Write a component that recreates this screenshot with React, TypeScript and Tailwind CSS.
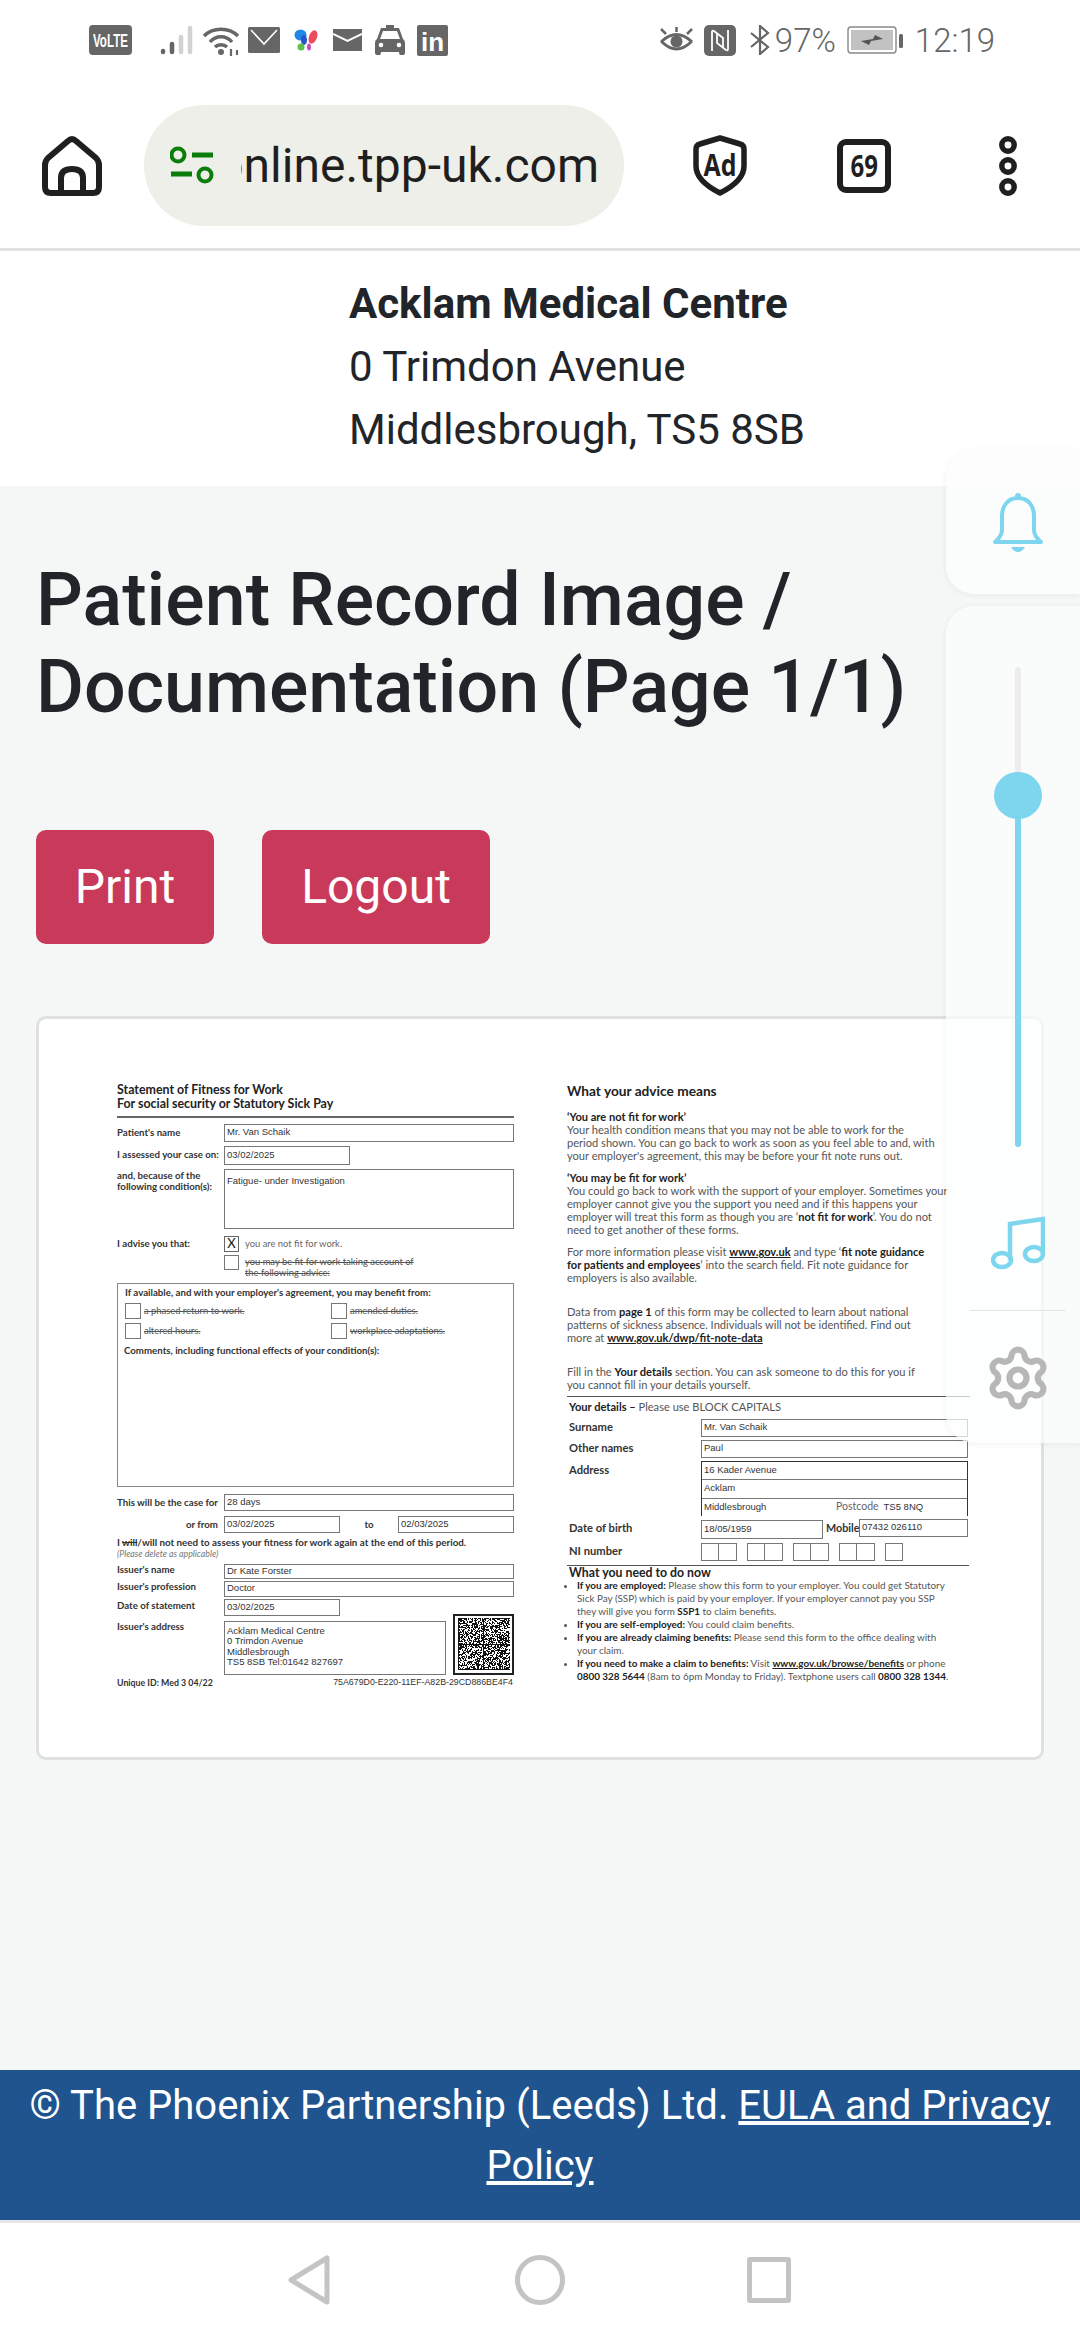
import React from "react";
import { Settings } from "lucide-react";

const ROB = "font-['Roboto',sans-serif]";
const ARIAL = "font-['Liberation_Sans',sans-serif]";

function Qr() {
  const rects: React.ReactNode[] = [];
  let s = 12345;
  const n = 52;
  for (let y = 0; y < n; y++) {
    for (let x = 0; x < n; x++) {
      s = (s * 1103515245 + 12345) & 0x7fffffff;
      const edge = y === 0 ? x % 2 === 0 : x === 0 || y === n - 1 || x === 25 || y === 26 ? true : false;
      if (edge || (s >> 12) % 100 < 52) rects.push(<rect key={x + "-" + y} x={x} y={y} width="1" height="1" />);
    }
  }
  return (
    <svg width="52" height="52" viewBox="0 0 52 52" shapeRendering="crispEdges" fill="#111">
      {rects}
    </svg>
  );
}

function Field({ children, className }: { children?: React.ReactNode; className: string }) {
  return (
    <div className={"border border-[#777] pl-[2px] flex items-center whitespace-nowrap text-[9.5px] text-[#333] " + ARIAL + " " + className}>
      {children}
    </div>
  );
}

function StatusBar() {
  return (
    <div className="h-[68px] pt-[12px] flex items-center justify-between pl-[89px] pr-[85px] bg-white">
      <div className="flex items-center">
        <svg width="43" height="30" viewBox="0 0 43 30">
          <rect width="43" height="30" rx="4" fill="#666" />
          <text x="21.5" y="22" textAnchor="middle" fontFamily="'Liberation Sans',sans-serif" fontWeight="700" fontSize="18" fill="#fff" textLength="35" lengthAdjust="spacingAndGlyphs">VoLTE</text>
        </svg>
        <svg className="ml-[28px]" width="33" height="30" viewBox="0 0 33 30" strokeLinecap="round" strokeWidth="4.5">
          <path d="M3 26V27" stroke="#666" />
          <path d="M12 19V27" stroke="#666" />
          <path d="M21 12V27" stroke="#d2d2d2" />
          <path d="M30 3V27" stroke="#d2d2d2" />
        </svg>
        <svg className="ml-[9px]" width="38" height="31" viewBox="0 0 38 31" fill="none" stroke="#666" strokeWidth="3.4">
          <path d="M2 11C11 2 27 2 36 11" />
          <path d="M8 17C14 10 24 10 30 17" />
          <path d="M13 22C16 19 22 19 25 22" />
          <circle cx="19" cy="27" r="3" fill="#666" stroke="none" />
          <path d="M29 31V24M35 25L35 30" strokeWidth="2.2" />
        </svg>
        <svg className="ml-[8px]" width="32" height="26" viewBox="0 0 32 26">
          <rect width="32" height="26" rx="1.5" fill="#666" />
          <path d="M3 3L16 17L29 3" fill="none" stroke="#fff" strokeWidth="1.6" />
        </svg>
        <svg className="ml-[14px]" width="24" height="22" viewBox="0 0 24 22">
          <ellipse cx="6.5" cy="6" rx="6" ry="5.5" fill="#1f88e5" />
          <ellipse cx="10" cy="11" rx="3" ry="5" fill="#2456c9" />
          <ellipse cx="19" cy="8" rx="4" ry="7" fill="#ef4b5f" transform="rotate(20 19 8)" />
          <ellipse cx="7" cy="18" rx="3.5" ry="3.5" fill="#5fbf4a" />
          <ellipse cx="15" cy="18" rx="2" ry="3.5" fill="#c74bc9" />
        </svg>
        <svg className="ml-[15px]" width="29" height="22" viewBox="0 0 29 22">
          <rect width="29" height="22" fill="#666" />
          <path d="M0 5L14.5 12L29 5" fill="none" stroke="#fff" strokeWidth="2" />
        </svg>
        <svg className="ml-[13px]" width="30" height="30" viewBox="0 0 30 30">
          <path d="M11 0H19V3H24L28 14Q30 15 30 18V28Q30 30 27 30H25Q24 30 24 27H6Q6 30 5 30H3Q0 30 0 28V18Q0 15 2 14L6 3H11Z" fill="#666" />
          <path d="M8 6H22L25 14H5Z" fill="#fff" />
          <circle cx="6" cy="20" r="2.3" fill="#fff" />
          <circle cx="24" cy="20" r="2.3" fill="#fff" />
        </svg>
        <svg className="ml-[12px]" width="31" height="31" viewBox="0 0 31 31">
          <rect width="31" height="31" rx="2" fill="#666" />
          <text x="15.5" y="26" textAnchor="middle" fontFamily="'Liberation Sans',sans-serif" fontWeight="700" fontSize="26" fill="#fff">in</text>
        </svg>
      </div>
      <div className="flex items-center">
        <svg width="35" height="27" viewBox="0 0 35 27" fill="none" stroke="#666">
          <path d="M3 14Q17.5 1 32 14Q32 15 32 15Q17.5 29 3 15Z" strokeWidth="3" />
          <circle cx="17.5" cy="14.500" r="6" fill="#666" stroke="none" />
          <path d="M2 2L7 7M17.500 0V5M33 2L28 7" strokeWidth="2.5" />
        </svg>
        <svg className="ml-[10px]" width="32" height="31" viewBox="0 0 32 31">
          <rect width="32" height="31" rx="5" fill="#666" />
          <path d="M8 26V7Q8 5 10 6L19 13V23M24 5V24Q24 26 22 25L13 18V8" fill="none" stroke="#fff" strokeWidth="1.8" />
        </svg>
        <svg className="ml-[13px]" width="22" height="30" viewBox="0 0 22 30" fill="none" stroke="#666" strokeWidth="2.2">
          <path d="M2 8L19 22L11 29V1L19 8L2 22" />
        </svg>
        <span className={"ml-[4px] text-[33px] leading-none text-[#666] font-light " + ROB}>97%</span>
        <svg className="ml-[11px]" width="56" height="28" viewBox="0 0 56 28">
          <rect x="1" y="1" width="48" height="26" rx="3" fill="#fff" stroke="#888" strokeWidth="1.4" />
          <rect x="4" y="4" width="42" height="20" fill="#c2c2c2" />
          <path d="M14 15L26 13L28 9L36 13L24 15L22 19Z" fill="#555" />
          <rect x="52" y="8" width="4" height="14" rx="1.5" fill="#666" />
        </svg>
        <span className={"ml-[12px] text-[33px] leading-none text-[#666] font-light " + ROB}>12:19</span>
      </div>
    </div>
  );
}

function Toolbar() {
  return (
    <div className="h-[180px] pt-[15px] pl-[42px] flex items-center bg-white">
      <svg width="60" height="60" viewBox="0 0 60 60" fill="none" stroke="#1f1f1f" strokeWidth="6" strokeLinejoin="round">
        <path d="M26 5Q30 1 34 5L54 22Q57 25 57 29V51Q57 57 51 57H9Q3 57 3 51V29Q3 25 6 22Z" />
        <path d="M19 57V42Q19 33 30 33Q41 33 41 42V57" />
      </svg>
      <div className="ml-[42px] w-[480px] h-[121px] rounded-[60px] bg-[#eeefe9] flex items-center pl-[26px]">
        <svg width="44" height="40" viewBox="0 0 44 40" fill="none" stroke="#0a7d0a" strokeWidth="4">
          <circle cx="8" cy="9" r="6.500" />
          <circle cx="35" cy="29" r="6.500" />
          <path d="M22 9H43M1 28H22" strokeWidth="5" />
        </svg>
        <div className="ml-[27px] w-[358px] overflow-hidden flex justify-end">
          <span className={"text-[48px] leading-[60px] text-[#1f1f1f] whitespace-nowrap " + ROB}>online.tpp-uk.com</span>
        </div>
      </div>
      <svg className="ml-[69px]" width="54" height="61" viewBox="0 0 54 61">
        <path d="M27 3L47 9Q51 10 51 14V31Q51 46 27 58Q3 46 3 31V14Q3 10 7 9Z" fill="none" stroke="#1f1f1f" strokeWidth="5.500" strokeLinejoin="round" />
        <text x="27" y="41" textAnchor="middle" fontFamily="'Open Sans',sans-serif" fontWeight="700" fontSize="30" fill="#1f1f1f" textLength="33" lengthAdjust="spacingAndGlyphs">Ad</text>
      </svg>
      <div className="ml-[90px] w-[54px] h-[54px] rounded-[9px] border-[6px] border-[#1f1f1f] flex items-center justify-center">
        <span className="font-['Open_Sans',sans-serif] font-bold text-[30px] leading-none text-[#1f1f1f] scale-x-[0.8]">69</span>
      </div>
      <svg className="ml-[108px]" width="18" height="60" viewBox="0 0 18 60" fill="none" stroke="#1f1f1f" strokeWidth="5.500">
        <circle cx="9" cy="9" r="6.200" />
        <circle cx="9" cy="30" r="6.200" />
        <circle cx="9" cy="51" r="6.200" />
      </svg>
    </div>
  );
}

function Strike({ children }: { children: React.ReactNode }) {
  return <span className="line-through text-[#555]">{children}</span>;
}

function LeftColumn() {
  const label = "w-[107px] shrink-0 text-[9.7px] leading-[11px] font-bold text-[#333]";
  const check = "w-[16px] h-[16px] border border-[#777] shrink-0";
  return (
    <div className="w-[397px] shrink-0 flex flex-col">
      <div className="-mt-px text-[12.4px] leading-[14px] font-bold text-[#222] whitespace-nowrap">
        Statement of Fitness for Work
        <br />
        For social security or Statutory Sick Pay
      </div>
      <div className="mt-[5px] h-[2px] bg-[#666]" />
      <div className="mt-[6px] flex items-start">
        <div className={label + " mt-[3px]"}>Patient's name</div>
        <Field className="w-[290px] h-[18px]">Mr. Van Schaik</Field>
      </div>
      <div className="mt-[4px] flex items-start">
        <div className={label + " mt-[3px] whitespace-nowrap"}>I assessed your case on:</div>
        <Field className="w-[126px] h-[19px]">03/02/2025</Field>
      </div>
      <div className="mt-[4px] flex items-start">
        <div className={label + " mt-[1px]"}>
          and, because of the
          <br />
          following condition(s):
        </div>
        <Field className="w-[290px] h-[60px] items-start pt-[4px]">Fatigue- under Investigation</Field>
      </div>
      <div className="mt-[7px] flex items-start">
        <div className={label + " mt-[2px]"}>I advise you that:</div>
        <div className="flex flex-col">
          <div className="flex items-center">
            <div className="w-[15px] h-[16px] border border-[#666] flex items-center justify-center text-[13px] leading-none text-[#111]">X</div>
            <span className="ml-[6px] text-[9.4px] leading-[11px] text-[#666]">you are not fit for work.</span>
          </div>
          <div className="mt-[3px] flex items-start">
            <div className="w-[15px] h-[15px] border border-[#777]" />
            <span className="ml-[6px] text-[9.4px] leading-[11px] mt-[1px]">
              <Strike>you may be fit for work taking account of</Strike>
              <br />
              <Strike>the following advice:</Strike>
            </span>
          </div>
        </div>
      </div>
      <div className="mt-[5px] h-[204px] border border-[#888] pl-[7px] pt-[3px] text-[9.7px] leading-[11px] flex flex-col">
        <div className="font-bold text-[#333] whitespace-nowrap">If available, and with your employer's agreement, you may benefit from:</div>
        <div className="mt-[5px] grid grid-cols-[206px_1fr] gap-y-[4px]">
          <div className="flex items-center">
            <div className={check} />
            <span className="ml-[3px] text-[9.4px]"><Strike>a phased return to work.</Strike></span>
          </div>
          <div className="flex items-center">
            <div className={check} />
            <span className="ml-[3px] text-[9.4px]"><Strike>amended duties.</Strike></span>
          </div>
          <div className="flex items-center">
            <div className={check} />
            <span className="ml-[3px] text-[9.4px]"><Strike>altered hours.</Strike></span>
          </div>
          <div className="flex items-center">
            <div className={check} />
            <span className="ml-[3px] text-[9.4px]"><Strike>workplace adaptations.</Strike></span>
          </div>
        </div>
        <div className="mt-[6px] -ml-px font-bold text-[#333] whitespace-nowrap">Comments, including functional effects of your condition(s):</div>
      </div>
      <div className="mt-[7px] flex items-center">
        <div className={label + " whitespace-nowrap"}>This will be the case for</div>
        <Field className="w-[290px] h-[17px]">28 days</Field>
      </div>
      <div className="mt-[5px] flex items-center">
        <div className={label + " text-right pr-[6px]"}>or from</div>
        <Field className="w-[116px] h-[17px]">03/02/2025</Field>
        <div className="w-[58px] text-center text-[9.7px] font-bold text-[#333]">to</div>
        <Field className="w-[116px] h-[17px]">02/03/2025</Field>
      </div>
      <div className="mt-[4px] text-[9.8px] leading-[11px] font-bold text-[#333] whitespace-nowrap">
        I <span className="line-through">will</span>/will not need to assess your fitness for work again at the end of this period.
      </div>
      <div className="text-[8.8px] leading-[11px] italic text-[#777]">(Please delete as applicable)</div>
      <div className="mt-[5px] flex items-start">
        <div className={label}>Issuer's name</div>
        <Field className="w-[290px] h-[15px]">Dr Kate Forster</Field>
      </div>
      <div className="mt-[2px] flex items-start">
        <div className={label}>Issuer's profession</div>
        <Field className="w-[290px] h-[16px]">Doctor</Field>
      </div>
      <div className="mt-[2px] flex items-start">
        <div className={label + " mt-[1px]"}>Date of statement</div>
        <Field className="w-[116px] h-[17px]">03/02/2025</Field>
      </div>
      <div className="mt-[5px] flex items-start">
        <div className={label}>Issuer's address</div>
        <div className={"w-[222px] h-[54px] border border-[#777] pl-[2px] pt-[4px] text-[9.5px] leading-[10.600px] text-[#333] whitespace-nowrap " + ARIAL}>
          Acklam Medical Centre
          <br />0 Trimdon Avenue
          <br />
          Middlesbrough
          <br />
          TS5 8SB Tel:01642 827697
        </div>
        <div className="ml-[7px] -mt-[7px] w-[61px] h-[61px] border-2 border-[#222] flex items-center justify-center bg-white">
          <Qr />
        </div>
      </div>
      <div className="mt-[2px] flex items-center justify-between whitespace-nowrap">
        <span className="text-[8.8px] leading-[11px] font-bold text-[#333]">Unique ID: Med 3 04/22</span>
        <span className={"text-[8.8px] leading-[11px] text-[#333] pr-[1px] " + ARIAL}>75A679D0-E220-11EF-A82B-29CD886BE4F4</span>
      </div>
    </div>
  );
}

function B({ children }: { children: React.ReactNode }) {
  return <b className="font-bold text-[#222]">{children}</b>;
}
function L({ children }: { children: React.ReactNode }) {
  return <b className="font-bold underline text-[#222]">{children}</b>;
}

function RightColumn() {
  const para = "text-[11.1px] leading-[13px] text-[#555] whitespace-nowrap";
  const lab = "w-[134px] shrink-0 text-[11.2px] font-bold text-[#333] pl-[2px]";
  const cell = "w-[18px] h-[18px] border border-[#777]";
  const cellR = "w-[18px] h-[18px] border border-l-0 border-[#777]";
  return (
    <div className="w-[403px] shrink-0 flex flex-col">
      <div className="text-[13.7px] leading-[14px] font-bold text-[#222] whitespace-nowrap">What your advice means</div>
      <div className={"mt-[12.5px] " + para}>
        <B>‘You are not fit for work’</B>
        <br />
        Your health condition means that you may not be able to work for the
        <br />
        period shown. You can go back to work as soon as you feel able to and, with
        <br />
        your employer's agreement, this may be before your fit note runs out.
      </div>
      <div className={"mt-[9px] " + para}>
        <B>‘You may be fit for work’</B>
        <br />
        You could go back to work with the support of your employer. Sometimes your
        <br />
        employer cannot give you the support you need and if this happens your
        <br />
        employer will treat this form as though you are ‘<B>not fit for work</B>’. You do not
        <br />
        need to get another of these forms.
      </div>
      <div className={"mt-[9px] " + para}>
        For more information please visit <L>www.gov.uk</L> and type ‘<B>fit note guidance</B>
        <br />
        <B>for patients and employees</B>’ into the search field. Fit note guidance for
        <br />
        employers is also available.
      </div>
      <div className={"mt-[21px] " + para}>
        Data from <B>page 1</B> of this form may be collected to learn about national
        <br />
        patterns of sickness absence. Individuals will not be identified. Find out
        <br />
        more at <L>www.gov.uk/dwp/fit-note-data</L>
      </div>
      <div className={"mt-[21px] " + para}>
        Fill in the <B>Your details</B> section. You can ask someone to do this for you if
        <br />
        you cannot fill in your details yourself.
      </div>
      <div className="mt-[5px] h-px bg-[#555]" />
      <div className={"mt-[3px] pl-[2px] " + para}>
        <B>Your details –</B> Please use BLOCK CAPITALS
      </div>
      <div className="mt-[5.5px] flex items-center">
        <div className={lab}>Surname</div>
        <Field className="w-[267px] h-[18px] border-[#444]">Mr. Van Schaik</Field>
      </div>
      <div className="mt-[3px] flex items-center">
        <div className={lab}>Other names</div>
        <Field className="w-[267px] h-[18px] border-[#333]">Paul</Field>
      </div>
      <div className="mt-[3px] flex items-start">
        <div className={lab + " mt-[1px]"}>Address</div>
        <div className={"w-[267px] h-[55px] border border-b-0 border-[#333] flex flex-col text-[9.500px] text-[#333] whitespace-nowrap " + ARIAL}>
          <div className="h-[18px] border-b border-[#777] pl-[2px] flex items-center">16 Kader Avenue</div>
          <div className="h-[19px] border-b border-[#777] pl-[2px] flex items-center">Acklam</div>
          <div className="flex-1 pl-[2px] flex items-center">
            <span className="w-[132px]">Middlesbrough</span>
            <span className="font-['Lato',sans-serif] text-[#666] text-[10.500px]">Postcode</span>
            <span className="ml-[5px]">TS5 8NQ</span>
          </div>
        </div>
      </div>
      <div className="mt-[3px] flex items-start">
        <div className={lab + " mt-[1px]"}>Date of birth</div>
        <Field className="w-[122px] h-[19px] mt-px">18/05/1959</Field>
        <div className="w-[36px] pl-[3px] text-[10.8px] font-bold text-[#333] mt-px">Mobile</div>
        <Field className="w-[109px] h-[18px]">07432 026110</Field>
      </div>
      <div className="mt-[4px] flex items-center">
        <div className={lab}>NI number</div>
        <div className={cell} />
        <div className={cellR} />
        <div className={cell + " ml-[10px]"} />
        <div className={cellR} />
        <div className={cell + " ml-[10px]"} />
        <div className={cellR} />
        <div className={cell + " ml-[10px]"} />
        <div className={cellR} />
        <div className={cell + " ml-[10px]"} />
      </div>
      <div className="mt-[4px] h-px bg-[#555] w-[402px]" />
      <div className="pl-[2px] text-[12.3px] leading-[13px] font-bold text-[#222] whitespace-nowrap">What you need to do now</div>
      <ul className="list-disc list-outside pl-[9px] ml-px text-[9.9px] leading-[13px] text-[#555] whitespace-nowrap">
        <li>
          <B>If you are employed:</B> Please show this form to your employer. You could get Statutory
          <br />
          Sick Pay (SSP) which is paid by your employer. If your employer cannot pay you SSP
          <br />
          they will give you form <B>SSP1</B> to claim benefits.
        </li>
        <li>
          <B>If you are self-employed:</B> You could claim benefits.
        </li>
        <li>
          <B>If you are already claiming benefits:</B> Please send this form to the office dealing with
          <br />
          your claim.
        </li>
        <li>
          <B>If you need to make a claim to benefits:</B> Visit <L>www.gov.uk/browse/benefits</L> or phone
          <br />
          <B>0800 328 5644</B> (8am to 6pm Monday to Friday). Textphone users call <B>0800 328 1344</B>.
        </li>
      </ul>
    </div>
  );
}

function Panels() {
  return (
    <>
      <div className="absolute left-[946px] top-[450px] w-[134px] h-[144px] rounded-l-[28px] bg-[#fcfdfd]/80 shadow-[0_1px_6px_rgba(0,0,0,0.06)] flex items-center justify-start pl-[46px]">
        <svg width="52" height="61" viewBox="0 0 52 61" fill="none" stroke="#7dd6ee" strokeWidth="4" strokeLinejoin="round">
          <circle cx="26" cy="4" r="3" fill="#7dd6ee" stroke="none" />
          <path d="M26 6C15 6 10 15 10 24V38Q10 44 3 50H49Q42 44 42 38V24C42 15 37 6 26 6Z" />
          <path d="M19 55H33Q30 60 26 60Q22 60 19 55Z" fill="#7dd6ee" stroke="none" />
        </svg>
      </div>
      <div className="absolute left-[946px] top-[606px] w-[134px] h-[837px] rounded-l-[28px] bg-[#fcfdfd]/70 shadow-[0_1px_6px_rgba(0,0,0,0.06)] flex flex-col items-center">
        <div className="relative mt-[61px] translate-x-[5px] w-[6px] h-[480px] rounded-full bg-[#ececec]">
          <div className="absolute left-0 right-0 top-[128px] bottom-0 rounded-full bg-[#7dd6ee]" />
          <div className="absolute -left-[21px] top-[105px] w-[48px] h-[47px] rounded-full bg-[#7dd6ee]" />
        </div>
        <svg className="mt-[69px] translate-x-[5px]" width="54" height="56" viewBox="0 0 54 56" fill="none" stroke="#7dd6ee" strokeWidth="4.500">
          <ellipse cx="11" cy="44" rx="9" ry="7" />
          <ellipse cx="43" cy="38" rx="9" ry="7" />
          <path d="M19 44V8L52 3V38" />
        </svg>
        <div className="mt-[38px] translate-x-[5px] w-[96px] h-px bg-[#e4e4e4]" />
        <Settings className="mt-[33px] ml-[10px]" size={68} strokeWidth={2.2} color="#b7b7b7" />
      </div>
    </>
  );
}

export default function App() {
  return (
    <div className={"relative w-[1080px] h-[2340px] overflow-hidden bg-white flex flex-col " + ROB}>
      <StatusBar />
      <Toolbar />
      <div className="h-[3px] bg-[#e2e2e2]" />
      <header className="h-[235px] pt-[21px] pl-[349px] bg-white text-[42px] leading-[63px] text-[#212529]">
        <div className="font-bold">Acklam Medical Centre</div>
        <div>0 Trimdon Avenue</div>
        <div>Middlesbrough, TS5 8SB</div>
      </header>
      <main className="flex-1 bg-[#f5f7f7] px-[36px] pt-[71px]">
        <h1 className="text-[73.500px] leading-[87px] font-medium text-[#212529] whitespace-nowrap">
          Patient Record Image /<br />
          Documentation (Page 1/1)
        </h1>
        <div className="mt-[98.500px] flex gap-[48px]">
          <button className="w-[178px] h-[114px] rounded-[10px] bg-[#c9395a] text-white text-[48px]">Print</button>
          <button className="w-[228px] h-[114px] rounded-[10px] bg-[#c9395a] text-white text-[48px]">Logout</button>
        </div>
        <div className="mt-[72px] w-[1008px] h-[744px] rounded-[10px] border-[3px] border-[#dfe1e1] bg-white pl-[78px] pt-[65px] flex font-['Lato',sans-serif]">
          <LeftColumn />
          <div className="w-[53px] shrink-0" />
          <RightColumn />
        </div>
      </main>
      <footer className="h-[150px] shrink-0 bg-[#20548f] text-white text-center text-[40px] leading-[60px] pt-[6px] px-[24px]">
        © The Phoenix Partnership (Leeds) Ltd. <a className="underline">EULA and Privacy Policy</a>
      </footer>
      <div className="h-[3px] shrink-0 bg-[#e6e6e6]" />
      <nav className="h-[117px] shrink-0 bg-white flex items-start pt-[32px] pl-[288px]">
        <svg width="42" height="50" viewBox="0 0 42 50" fill="none" stroke="#c4c4c4" strokeWidth="5" strokeLinejoin="round">
          <path d="M39 3V47L3 25Z" />
        </svg>
        <svg className="ml-[185px]" width="50" height="50" viewBox="0 0 50 50" fill="none" stroke="#c4c4c4" strokeWidth="5">
          <circle cx="25" cy="25" r="22.500" />
        </svg>
        <div className="ml-[182px] mt-[2px] w-[44px] h-[46px] border-[5px] border-[#c4c4c4] rounded-[3px]" />
      </nav>
      <Panels />
    </div>
  );
}
